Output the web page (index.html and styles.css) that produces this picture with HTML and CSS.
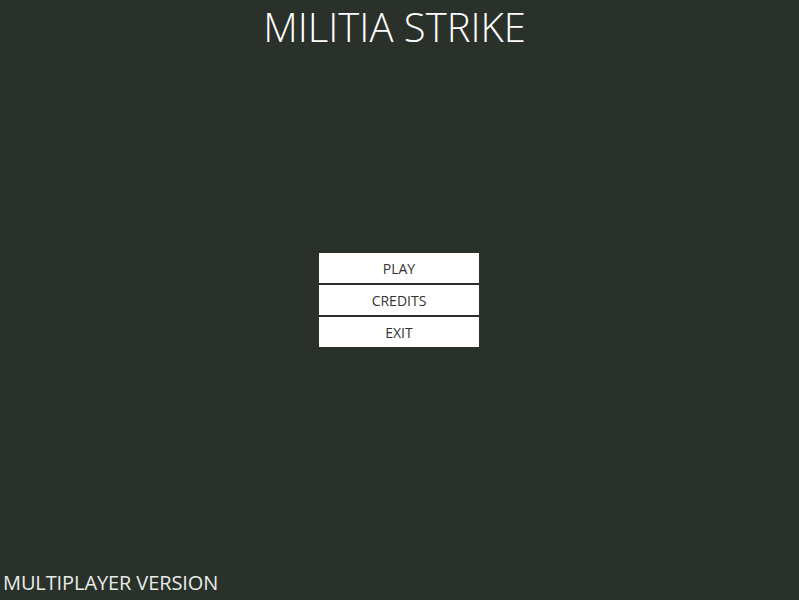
FILE: index.html
```html
<!DOCTYPE html>
<html>
<head>
<meta charset="utf-8">
<link rel="stylesheet" href="styles.css">
</head>
<body>
<div class="screen">
  <h1 class="title">MILITIA STRIKE</h1>
  <div class="menu">
    <div class="btn">PLAY</div>
    <div class="btn">CREDITS</div>
    <div class="btn">EXIT</div>
  </div>
  <div class="footer">MULTIPLAYER VERSION</div>
</div>
</body>
</html>
```
FILE: styles.css
```css
html, body {
  margin: 0;
  padding: 0;
  background: #29312a;
}
.screen {
  width: 798px;
  height: 600px;
  display: flex;
  flex-direction: column;
  align-items: center;
  font-family: "Open Sans", sans-serif;
}
.title {
  margin: 0;
  padding-top: 2px;
  padding-right: 9px;
  font-size: 40px;
  font-weight: 300;
  line-height: 50px;
  color: #ffffff;
}
.menu {
  margin-top: 201px;
  display: flex;
  flex-direction: column;
  gap: 2px;
}
.btn {
  width: 160px;
  height: 30px;
  box-sizing: border-box;
  padding-top: 1px;
  background: #ffffff;
  color: #333333;
  font-size: 14px;
  line-height: 30px;
  text-align: center;
}
.footer {
  margin-top: auto;
  align-self: flex-start;
  padding-left: 3px;
  padding-bottom: 4px;
  font-size: 20px;
  letter-spacing: -0.1px;
  line-height: 26px;
  color: #e8ece8;
}
```
